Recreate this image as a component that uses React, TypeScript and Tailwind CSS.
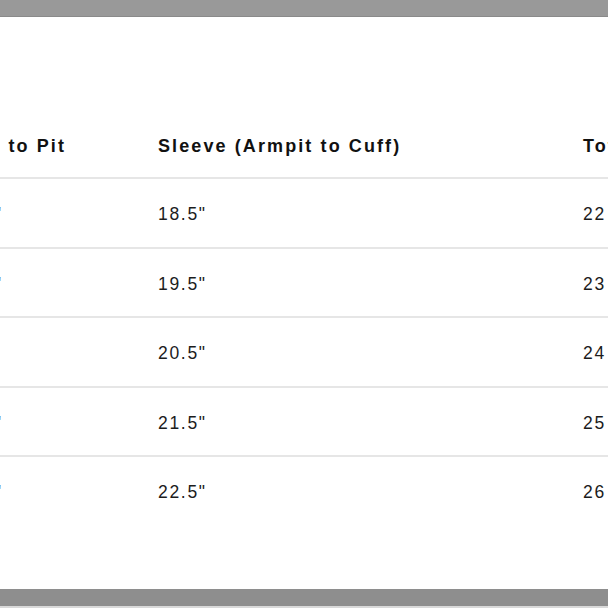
import React from 'react';

const rows = [
  ['20"', '18.5"', '22'],
  ['21"', '19.5"', '23'],
  ['22', '20.5"', '24'],
  ['23"', '21.5"', '25'],
  ['24"', '22.5"', '26'],
];

function App() {
  return (
    <div className="w-[608px] h-[608px] flex flex-col bg-white overflow-hidden font-['Liberation_Sans',Arial,sans-serif]">
      <div className="h-[17px] bg-[#999999] border-b border-[#8a8a8a]" />

      <div className="flex-1 overflow-hidden">
        <div className="ml-[-28px] w-[760px]">
          <div className="grid grid-cols-[186px_425px_1fr] border-b-2 border-[#e6e6e6] pt-[117px] pb-[19px] text-[18px] leading-6 font-bold tracking-[2.1px] text-[#111]">
            <div>Pit to Pit</div>
            <div>Sleeve (Armpit to Cuff)</div>
            <div>Total Length</div>
          </div>

          {rows.map((r, i) => (
            <div
              key={i}
              className={
                'grid grid-cols-[186px_425px_1fr] pt-[23px] pb-[20.5px] text-[17.5px] leading-6 tracking-[1.7px] text-[#1c1c1c] ' +
                (i < rows.length - 1 ? 'border-b-2 border-[#e6e6e6]' : '')
              }
            >
              <div>{r[0]}</div>
              <div>{r[1]}</div>
              <div>{r[2]}</div>
            </div>
          ))}
        </div>
      </div>

      <div className="h-[19px] bg-[#8e8e8e] border-b-2 border-[#d9d9d9]" />
    </div>
  );
}

export default App;
